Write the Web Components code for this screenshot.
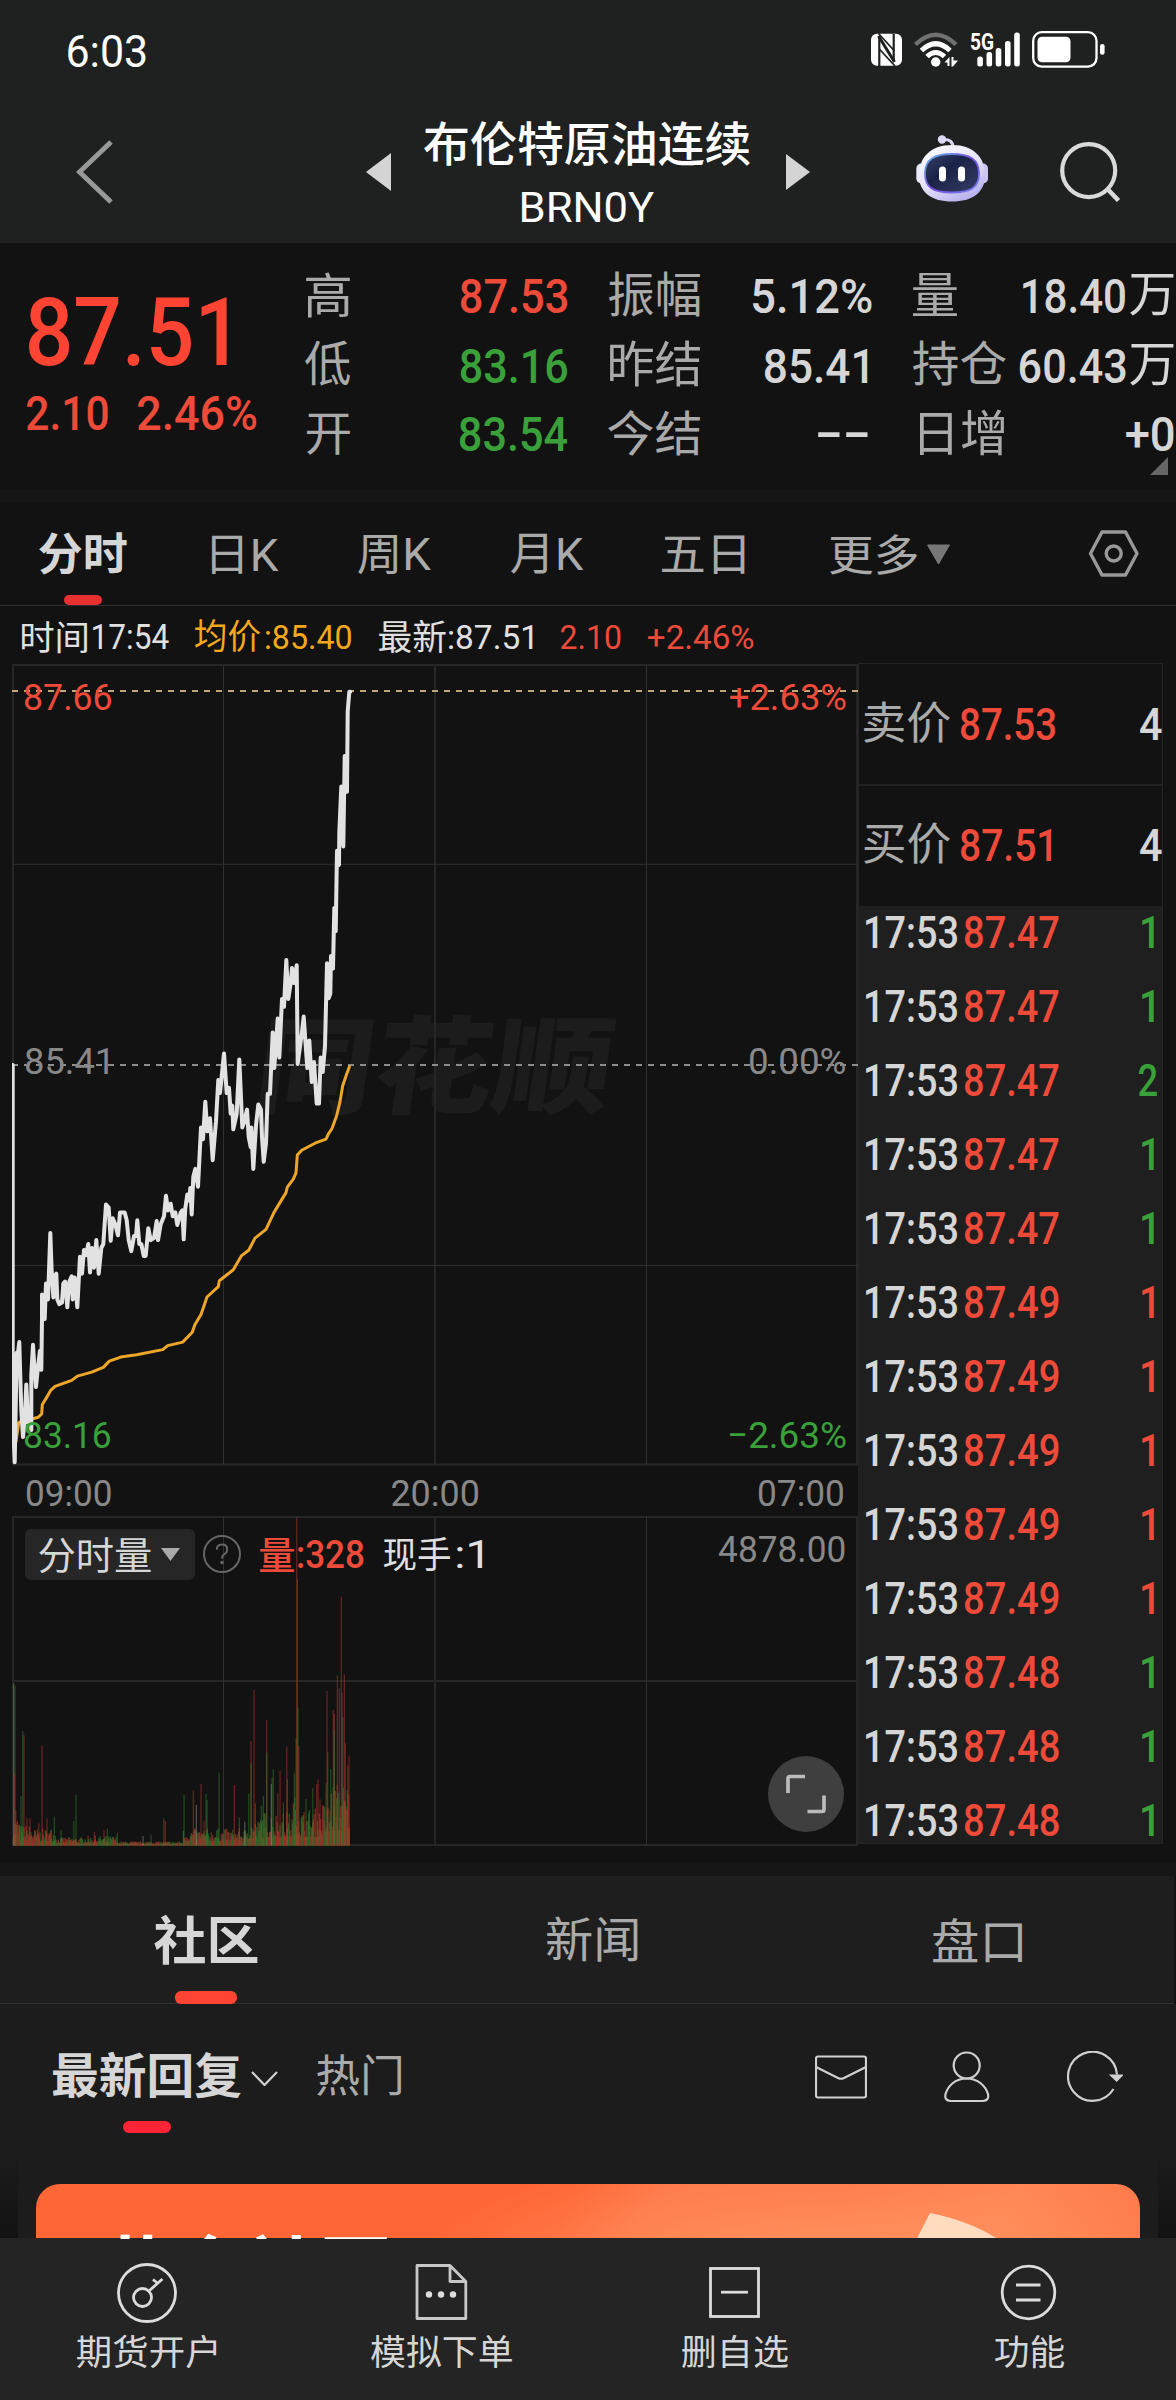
<!DOCTYPE html>
<html lang="zh-CN">
<head>
<meta charset="utf-8">
<title>布伦特原油连续 BRN0Y</title>
<style>
html,body{margin:0;padding:0;background:#121212}
body{width:1176px;height:2400px;overflow:hidden;font-family:Roboto,"Noto Sans CJK SC",sans-serif;color:#d6d6d6;font-weight:400;
--red:#ed4a3a;--hot:#ff4433;--green:#3aa03a;--dim:#aaaaaa;--txt:#d6d6d6}
</style>
</head>
<body>
<quote-page></quote-page>
<script>
const ctx = document.createElement('canvas').getContext('2d');

/* Text sized by its ink: w and h give the drawn width and height of the glyphs. */
class InkText extends HTMLElement {
  connectedCallback() {
    if (this.shadowRoot) return;
    const r = this.attachShadow({mode: 'open'});
    r.innerHTML = '<style>:host{display:block;flex:none}span{display:block;width:max-content;white-space:pre;transform-origin:0 0}i{display:inline-block;width:0;height:0}</style><span><slot></slot><i></i></span>';
    const w = +this.getAttribute('w'), h = +this.getAttribute('h'), dy = +(this.getAttribute('dy') || 0);
    const cs = getComputedStyle(this), s = r.querySelector('span'), t = this.textContent;
    ctx.font = `${cs.fontWeight} 200px ${cs.fontFamily}`;
    const m = ctx.measureText(t);
    const size = this.hasAttribute('size') ? +this.getAttribute('size') : 200 * h / (m.actualBoundingBoxAscent + m.actualBoundingBoxDescent);
    const k = size / 200;
    const inkW = (m.actualBoundingBoxLeft + m.actualBoundingBoxRight) * k;
    const sx = w / inkW;
    this.style.width = w + 'px';
    this.style.height = h + 'px';
    s.style.fontSize = size + 'px';
    s.style.lineHeight = h + 'px';
    const mark = r.querySelector('i');
    const base = mark.getBoundingClientRect().bottom - s.getBoundingClientRect().top;
    s.style.transform = `translate(${m.actualBoundingBoxLeft * k * sx}px,${m.actualBoundingBoxAscent * k - base + dy}px) scaleX(${sx})`;
  }
}
customElements.define('ink-text', InkText);

function define(name, css, html) {
  customElements.define(name, class extends HTMLElement {
    connectedCallback() {
      if (this.shadowRoot) return;
      this.attachShadow({mode: 'open'}).innerHTML =
        `<style>:host{display:block}*{box-sizing:border-box}svg{display:block;flex:none}${css}</style>` +
        (typeof html === 'function' ? html(this) : html);
    }
  });
}

define('status-bar', `:host{display:flex;height:100px;align-items:center;justify-content:space-between;padding:0 68px;color:#fff;font-weight:400}`, `
<ink-text w="77.5" h="33">6:03</ink-text>
<svg width="240" height="100" viewBox="868 0 240 100">
 <rect x="871" y="33.7" width="31" height="32" rx="6" fill="#fff"/>
 <g fill="none" stroke="#1f2120"><path d="M879.300 36V66M893.700 34V60" stroke-width="2.200"/><path d="M878.500 36L894.500 62" stroke-width="3"/><path d="M878.500 33.500L894.500 51M879.300 49L895 66" stroke-width="1.800"/></g>
 <g fill="none" stroke="#fff" stroke-width="5">
  <path d="M915.500 44.500Q935.700 25 956 44.500" stroke="#6f706f" stroke-width="4.500"/>
  <path d="M921.500 50.500Q935.700 37 950 50.500" />
  <path d="M927 56.500Q935.700 48.500 944.500 56.500"/>
 </g>
 <circle cx="935.700" cy="62" r="4.700" fill="#fff"/>
 <path d="M944.500 62.500l5-5.500v9h-2v-3.500zM951.500 57h2v3.500h4.500l-5 6h-1.500z" fill="#fff"/>
 <text x="970" y="49.800" font-family="Roboto" font-weight="700" font-size="23.500" fill="#fff" textLength="24" lengthAdjust="spacingAndGlyphs">5G</text>
 <g fill="#fff"><rect x="977.300" y="56.500" width="5.600" height="10" rx="2.500"/><rect x="986.500" y="52" width="5.600" height="14.500" rx="2.500"/><rect x="995.700" y="48" width="5.600" height="18.500" rx="2.500"/><rect x="1005" y="41" width="5.600" height="25.500" rx="2.500"/><rect x="1014.200" y="32.500" width="5.600" height="34" rx="2.500"/></g>
 <rect x="1033.200" y="32.200" width="63.300" height="34.400" rx="8.500" fill="none" stroke="#fff" stroke-width="2.300"/>
 <rect x="1037.500" y="36.700" width="33" height="25.600" rx="4.500" fill="#fff"/>
 <rect x="1100" y="44" width="4.600" height="10.800" rx="2.200" fill="#fff"/>
</svg>`);

define('title-bar', `:host{display:flex;height:143px;align-items:center;color:#fff}
.t{display:flex;flex-direction:column;align-items:center;gap:26.300px;margin-left:33px;width:326px}
.en{font-weight:400;margin-left:2px}.cn{font-weight:500}`, `
<svg style="margin-left:76px" width="38" height="64" viewBox="76 139 38 64"><path d="M111 141L79.500 171L111 201" fill="none" stroke="#999" stroke-width="5"/></svg>
<svg style="margin-left:252px" width="25" height="38" viewBox="0 0 25 38"><path d="M25 0v38L0 19z" fill="#d4d4d4"/></svg>
<div class="t"><ink-text class="cn" w="326" h="44">布伦特原油连续</ink-text><ink-text class="en" w="132" h="31">BRN0Y</ink-text></div>
<svg style="margin-left:36px" width="24" height="36" viewBox="0 0 24 36"><path d="M0 0v36L24 18z" fill="#d4d4d4"/></svg>
<svg style="margin:-7px 0 0 106px" width="72" height="67" viewBox="916 134.500 72 67">
 <defs><linearGradient id="rb" x1="0" y1="0" x2=".6" y2="1"><stop offset="0" stop-color="#fff"/><stop offset=".6" stop-color="#e4e2fa"/><stop offset="1" stop-color="#b9b4ee"/></linearGradient>
 <linearGradient id="rs" x1="0" y1="0" x2="1" y2="1"><stop offset="0" stop-color="#5fb9e8"/><stop offset=".5" stop-color="#7a4fe0"/><stop offset="1" stop-color="#6f7df0"/></linearGradient>
 <linearGradient id="rf" x1="0" y1="0" x2="1" y2="1"><stop offset="0" stop-color="#38446c"/><stop offset=".4" stop-color="#1a2247"/><stop offset="1" stop-color="#363e66"/></linearGradient></defs>
 <path d="M943 139q10-.5 10 8" fill="none" stroke="#d9d7f3" stroke-width="3"/><circle cx="942" cy="139" r="4.200" fill="#dcdaf5"/>
 <rect x="916.300" y="163" width="12" height="20" rx="5" fill="#e9e8fb"/><rect x="976" y="163" width="12" height="20" rx="5" fill="#c9c6f2"/>
 <path d="M952 144.500c22 0 33 13 33 30c0 18-13 26.500-33 26.500s-33-8.500-33-26.500c0-17 11-30 33-30z" fill="url(#rb)"/>
 <path d="M952 153.500c18 0 27 5.500 27 19.500s-8 19-27 19s-27-5-27-19s9-19.500 27-19.500z" fill="url(#rf)" stroke="url(#rs)" stroke-width="1.800"/>
 <rect x="939" y="166" width="7" height="15" rx="3.500" fill="#fff"/><rect x="958" y="166" width="7" height="15" rx="3.500" fill="#fff"/>
</svg>
<svg style="margin-left:72px" width="61" height="60" viewBox="1060 141 61 60"><circle cx="1088.700" cy="169.600" r="26.500" fill="none" stroke="#dadada" stroke-width="4.200"/><path d="M1107.500 188L1118.500 199.500" stroke="#dadada" stroke-width="4.600"/></svg>`);

define('stat-cell', `:host{display:flex;align-items:center;justify-content:space-between;height:69.300px}::slotted([slot=label]){color:#aaa}.v{display:flex;align-items:center;gap:5px}`,
 `<slot name="label"></slot><div class="v"><slot></slot></div>`);

define('quote-panel', `:host{display:flex;height:247px;background:#121212;padding-left:27px;font-weight:500}
.l{width:279px;display:flex;flex-direction:column;padding-top:54.300px;color:var(--red)}
.chg{display:flex;gap:30.300px;margin-top:28.700px}
.r{padding-top:16.500px;width:870px}
.g{display:grid;grid-template-columns:261px 263.500px 261px;column-gap:42px;color:var(--txt)}
.g>:nth-child(3n){margin-left:-2px;margin-right:2px}.g>:nth-child(3n+2){margin-left:-1px;margin-right:1px}
.c{font-weight:400}
.up{color:var(--red)}.dn{color:var(--green)}
.tri{margin:-10px 0 0 844px}`, `
<div class="l"><ink-text style="margin-left:2px;color:var(--hot)" w="197.5" h="69">87.51</ink-text>
<div class="chg"><ink-text w="80.5" h="35.3">2.10</ink-text><ink-text w="118" h="35.3">2.46%</ink-text></div></div>
<div class="r"><div class="g">
<stat-cell><ink-text class="c" slot="label" w="44" h="44.7">高</ink-text><ink-text class="up" w="106" h="35" dy="1.5">87.53</ink-text></stat-cell>
<stat-cell><ink-text class="c" slot="label" style="margin-left:1px" w="91" h="44.5">振幅</ink-text><ink-text w="118.500" h="35" dy="1.5">5.12%</ink-text></stat-cell>
<stat-cell><ink-text class="c" slot="label" w="44" h="42.5">量</ink-text><ink-text w="102" h="35" dy="1.5">18.40</ink-text><ink-text class="c" w="43.500" h="41">万</ink-text></stat-cell>
<stat-cell><ink-text class="c" slot="label" style="margin-left:-1px" w="45" h="44.7">低</ink-text><ink-text class="dn" w="106" h="35.5" dy="1.8">83.16</ink-text></stat-cell>
<stat-cell><ink-text class="c" slot="label" style="margin-left:2px" w="90" h="45">昨结</ink-text><ink-text style="margin-right:5px" w="102" h="35.3" dy="1.8">85.41</ink-text></stat-cell>
<stat-cell><ink-text class="c" slot="label" w="93" h="44.500">持仓</ink-text><ink-text w="105.500" h="35.300" dy="1.8">60.43</ink-text><ink-text class="c" w="43.500" h="41" dy="1.5">万</ink-text></stat-cell>
<stat-cell><ink-text class="c" slot="label" style="margin-left:1px" w="43" h="40.700" dy="1.500">开</ink-text><ink-text class="dn" w="107" h="35.300" dy="1.5">83.54</ink-text></stat-cell>
<stat-cell><ink-text class="c" slot="label" w="92" h="45">今结</ink-text><ink-text style="margin-right:4px" w="49.700" h="5" size="50" dy="2">--</ink-text></stat-cell>
<stat-cell><ink-text class="c" slot="label" style="margin-left:7px" w="84" h="45">日增</ink-text><ink-text w="47.500" h="35" dy="1.5">+0</ink-text></stat-cell>
</div><svg class="tri" width="18" height="18"><path d="M18 0v18H0z" fill="#666"/></svg></div>`);

define('period-tabs', `:host{display:flex;height:103px;align-items:center;background:#121212;border-bottom:1.500px solid #2e2e2e;color:#aaa;padding-left:39px}
.a{height:100%;display:flex;align-items:center;position:relative;color:var(--txt);font-weight:700}
.a i{position:absolute;left:25px;bottom:0;width:38px;height:10px;border-radius:5px;background:#e93030}`, `
<div class="a"><ink-text w="87.700" h="41.700">分时</ink-text><i></i></div>
<ink-text style="margin-left:85.500px" w="66.500" h="38.300" dy=".8">日K</ink-text>
<ink-text style="margin-left:79.300px" w="73" h="39.500" dy=".6">周K</ink-text>
<ink-text style="margin-left:79.700px" w="72.500" h="39.500" dy=".6">月K</ink-text>
<ink-text style="margin-left:78.500px" w="82.500" h="38.700" dy=".6">五日</ink-text>
<ink-text style="margin-left:86px" w="87" h="40.500" dy=".6">更多</ink-text>
<svg style="margin-left:9px" width="25" height="22"><path d="M1.500 2h22L12.500 21z" fill="#777" stroke="#777" stroke-linejoin="round"/></svg>
<svg style="margin-left:137px" width="52" height="50" viewBox="1088 530 52 50" fill="none" stroke="#999" stroke-width="3.400"><path d="M1090.500 554.500L1102 533h23.500L1137 554.500L1125.500 576H1102z" stroke-linejoin="round"/><circle cx="1113.700" cy="554.500" r="7.500"/></svg>`);

define('info-line', `:host{display:flex;height:58px;align-items:center;padding:3px 0 0 22px;color:#e0e0e0}
.avg{color:#f5a81c}.up{color:var(--red)}`, `
<ink-text w="65" h="32">时间</ink-text><ink-text style="margin-left:5.700px" w="75.500" h="25">17:54</ink-text>
<ink-text class="avg" style="margin-left:27px" w="65" h="32.500">均价</ink-text><ink-text class="avg" style="margin-left:5.500px" w="85" h="25">:85.40</ink-text>
<ink-text style="margin-left:28px" w="66.500" h="32.500">最新</ink-text><ink-text style="margin-left:4px" w="83.300" h="25">:87.51</ink-text>
<ink-text class="up" style="margin-left:28.500px" w="59.300" h="25">2.10</ink-text><ink-text class="up" style="margin-left:27.500px" w="105.300" h="25">+2.46%</ink-text>`);

const price1 = [38,417,38,1300,44,1422,50,1145,54,1145,58,1118,60,1180,64,1290,69,1358,74,1320,79,1225,84,1320,90,1300,94,1340,94,1200,99,1125,103,1180,108,1232,114,1180,120,1140,124,1188,126,1060,126,998,134,1060,138,970,144,1010,151,842,155,940,160,1005,165,950,169,945,172,1010,178,1022,186,1018,190,970,195,965,202,1030,208,965,215,952,218,1010,224,955,232,1030,240,902,246,945,252,885,258,898,265,870,270,942,276,880,282,930,289,860,296,945,304,880,310,870,318,770,326,778,332,862,338,805,346,820,354,848,360,790,374,790,380,810,386,860,394,888,402,850,408,850,412,810,418,870,424,870,431,900,437,900,445,830,452,860,462,855,470,812,474,860,482,820,492,800,498,748,504,785,512,768,518,800,526,790,532,822,542,790,547,785,551,858,556,780,562,745,568,760,571,728,575,795,580,700,586,680,594,725,603,575,609,605,616,510,622,585,630,552,638,658,648,560,655,455,660,488,672,388,680,488,687,475,692,540,697,520,700,580,710,540,718,403,727,575,733,560,741,530,746,600,752,625,754,575,760,680,768,570,775,517,783,530,786,600,791,662,798,615,803,490,810,490,818,335,823,425,833,300,838,398,846,250,852,270,859,152,865,250,872,210,876,172,882,210,890,165,893,415,900,370,905,340,911,295,922,425,928,355,935,460,942,410,950,515,957,515,962,398,968,435,975,370];
const price2 = [381,905,386,1003,391,990,393,885,399,920,403,750,407,815,411,590,417,630,418,540,424,410,430,578,434,325,441,425,443,200,448,145,451,145];
const average = [48,1370,56,1322,70,1316,98,1312,115,1308,125,1300,127,1276,140,1258,152,1240,165,1230,215,1215,232,1204,275,1194,310,1182,328,1166,362,1156,410,1150,488,1137,503,1127,548,1118,577,1093,584,1075,603,1048,621,1004,655,978,658,963,700,935,724,900,746,886,765,855,798,833,822,790,858,740,862,726,880,706,888,690,892,645,905,633,945,615,978,605,985,592,996,578,1010,545,1020,510,1028,470,1040,440,1048,422];
const pts = (a, fx, fy) => { const o = []; for (let i = 0; i < a.length; i += 2) o.push(fx(a[i]).toFixed(1) + ',' + fy(a[i + 1]).toFixed(1)); return o.join(' '); };
const early = a => pts(a, x => x / 3, y => 900 + y / 2.529);
const late = a => pts(a, x => 200 + x / 3, y => 640 + y / 2.8);

function volumeBars() {
  const R = '#b5362c', G = '#2f7d2b', W = '#8a8a8a', O = '#6f5a22';
  let seed = 7, out = '';
  const rnd = () => (seed = (seed * 16807) % 2147483647) / 2147483647;
  const bar = (x, top, c, o = .45) => { out += `<rect x="${(x / 3 - .6).toFixed(1)}" y="${(1490 + top / 3).toFixed(1)}" width="1.300" height="${((1067 - top) / 3).toFixed(1)}" fill="${c}" opacity="${o}"/>`; };
  for (let x = 40; x <= 1049; x += 2) {
    let e = x < 60 ? 90 : x < 100 ? 60 : x < 170 ? 48 : x < 250 ? 22 : x < 350 ? 26 : x < 550 ? 9 : x < 740 ? 48 : x < 780 ? 75 : x < 880 ? 100 : x < 900 ? 150 : x < 960 ? 110 : x < 990 ? 130 : 190;
    const h = 4 + e * (.2 + .8 * Math.pow(rnd(), 1.6));
    bar(x, 1067 - h, rnd() < .56 ? R : G, .62);
  }
  [[41,580,W],[45,588,G],[43,850,R],[47,960,R],[63,918,G],[68,724,G],[72,736,R],[81,985,R],[90,985,R],[126,766,R],[116,1000,R],[141,985,R],[163,980,G],[154,1018,G],[221,993,G],[228,915,G],[183,1020,G],[283,1025,R],[312,1020,R],[322,1016,G],[352,1028,G],[429,1038,W],[453,1034,G],[491,984,R],[496,993,R],
   [552,914,G],[580,901,R],[589,945,W],[603,882,R],[612,992,R],[618,912,G],[621,930,G],[657,848,G],[703,885,R],[718,982,G],[734,995,W],[746,912,G],[753,753,R],[753,820,G],[762,600,R],[766,940,R],[784,948,G],[790,918,G],[800,690,R],[800,788,G],[816,862,G],[820,838,G],[814,882,W],[833,910,R],[840,843,R],[850,937,G],[860,770,R],[862,868,G],[883,850,G],[888,745,G],[890,82,R],[892,268,O],[894,655,G],[896,768,R],[918,927,G],[938,894,G],[950,882,R],[954,868,R],[960,928,R],[978,880,G],[981,603,R],[983,787,G],[992,837,G],[1000,660,R],[1003,672,R],[1003,720,G],[1012,556,R],[1018,595,R],[1024,320,R],[1026,608,R],[1028,681,G],[1033,553,R],[1036,760,R],[1043,826,R],[1047,797,R],[1046,915,R]]
   .forEach(b => bar(b[0], b[1], b[2], .5));
  return out;
}

define('price-chart', `:host{display:grid;width:846px;height:1182px;flex:none}
:host>*,.wm,.plot,.lay{grid-area:1/1}
.wm{margin:350px 0 0 252px;width:346px;height:102px;transform:skewX(-8deg);color:#1c1c1c;font-weight:900;z-index:0}
.plot{z-index:1}
.lay{display:flex;flex-direction:column;color:#888;z-index:2}
.row{display:flex;justify-content:space-between;align-items:center;padding:0 13px}
.up{color:var(--red)}.dn{color:var(--green)}
.vol{display:flex;align-items:center;height:51px;margin:21.500px 0 0 13px}
.pill{display:flex;align-items:center;width:170px;height:51px;border-radius:6px;background:#262626;padding-left:14px;color:var(--txt)}
.full{margin:176px 14px 0 auto}`, () => `
<div class="wm"><ink-text w="346" h="102">同花顺</ink-text></div>
<svg class="plot" width="846" height="1182" viewBox="12 664 846 1182">
 <g fill="none" stroke="#262626" stroke-width="2">
  <path d="M12 665H858M13 664V1465M857 664V1465M12 1464.500H858M435 665V1465M12 1517H858M12 1681H858M12 1845H858M13 1516V1846M857 1516V1846M435 1516V1846"/>
  <path d="M223.500 665V1465M646.500 665V1465M12 864.300H858M12 1265.500H858M223.500 1516V1846M646.500 1516V1846" stroke="#303030" stroke-width="1"/></g>
 ${volumeBars()}
 <path d="M12 691H858" stroke="#c3a877" stroke-width="2" stroke-dasharray="6 6"/>
 <path d="M12 1065H858" stroke="#8d8d8d" stroke-width="2" stroke-dasharray="6 6"/>
 <g fill="none" stroke-linejoin="round" stroke-linecap="round">
 <polyline stroke="#eda628" stroke-width="3" points="${early(average)}"/>
 <polyline stroke="#e2e2e2" stroke-width="4" points="${early(price1)} ${late(price2)}"/></g>
</svg>
<div class="lay">
 <div class="row up" style="margin-top:19px"><ink-text w="86" h="27">87.66</ink-text><ink-text w="115.500" h="27">+2.63%</ink-text></div>
 <div class="row" style="margin-top:336.700px"><ink-text style="margin-left:.5px" w="82" h="27.300">85.41</ink-text><ink-text w="95" h="27.300">0.00%</ink-text></div>
 <div class="row dn" style="margin-top:347px"><ink-text w="85" h="27.400">83.16</ink-text><ink-text w="115.500" h="27.400">−2.63%</ink-text></div>
 <div class="row" style="margin-top:31px;padding:0 15px"><ink-text w="83.700" h="27.700">09:00</ink-text><ink-text w="86" h="27.700">20:00</ink-text><ink-text w="84" h="27.700">07:00</ink-text></div>
 <div class="vol"><div class="pill"><ink-text w="111.700" h="35">分时量</ink-text><svg style="margin-left:10px" width="19" height="13"><path d="M0 0h19L9.500 13z" fill="#aaa"/></svg></div>
 <svg style="margin-left:7px" width="40" height="40" viewBox="0 0 40 40"><circle cx="20" cy="20" r="18" fill="none" stroke="#666" stroke-width="2"/><path d="M14.800 15.800q0-5.200 5.200-5.200t5.200 4.800q0 2.800-2.700 4.600T20 24.500" fill="none" stroke="#666" stroke-width="2"/><circle cx="20" cy="28.500" r="1.700" fill="#666"/></svg>
 <ink-text class="up" style="margin-left:17.500px;font-weight:500" w="34" h="33">量</ink-text><ink-text class="up" style="margin-left:4.500px;font-weight:500" w="65.300" h="28">:328</ink-text>
 <ink-text style="margin-left:21px;color:#e0e0e0" w="66" h="34">现手</ink-text><ink-text style="margin-left:7px;color:#e0e0e0" w="25" h="28">:1</ink-text>
 <ink-text style="margin-left:237px" w="125.500" h="27.700" dy="-5.500">4878.00</ink-text></div>
 <svg class="full" width="76" height="76" viewBox="0 0 76 76"><circle cx="38" cy="38" r="38" fill="#3f3f3f"/><path d="M37 20.500H22Q20 20.500 20 22.500V37M56 39.500V53.500Q56 55.500 54 55.500H39.500" fill="none" stroke="#bbb" stroke-width="3.700"/></svg>
</div>`);

define('trade-row', `:host{display:flex;height:74px;align-items:flex-start;padding:10px 0 0 7px;color:var(--txt);font-weight:500}
.p{color:var(--red);margin-left:8px}.q{margin-left:79px;width:20px;display:flex;justify-content:center}.r{color:var(--red)}.g{color:var(--green)}`,
 el => `<ink-text w="91" h="32">17:53</ink-text><ink-text class="p" w="93.500" h="32">${el.getAttribute('p')}</ink-text><div class="q ${el.getAttribute('c')}"><ink-text w="${el.getAttribute('q') === '1' ? 11.5 : 18}" h="32">${el.getAttribute('q')}</ink-text></div>`);

define('order-side', `:host{display:block;width:305px;height:1181px;border:1.500px solid #242424;border-left-width:1px;margin-top:-.700px}
.q{display:flex;align-items:center;height:120px;padding-left:4.500px;font-weight:500}
.q+.q{border-top:2px solid #222;height:122px}
.n{color:#aaa;font-weight:400}.p{color:var(--red);margin-left:11.500px}.v{color:var(--txt)}
.list{background:#1f1f1f;height:937px}trade-row:last-child{height:49px}`, () => `
<div class="q"><ink-text class="n" w="86" h="41.500" dy="-2">卖价</ink-text><ink-text class="p" w="94" h="32">87.53</ink-text><ink-text class="v" style="margin-left:84.500px" w="21.500" h="32">4</ink-text></div>
<div class="q"><ink-text class="n" w="86" h="41.500" dy="-3">买价</ink-text><ink-text class="p" w="90" h="32" dy="-1">87.51</ink-text><ink-text class="v" style="margin-left:88.500px" w="21.500" h="32" dy="-1">4</ink-text></div>
<div class="list">${[['87.47',1,'g'],['87.47',1,'g'],['87.47',2,'g'],['87.47',1,'g'],['87.47',1,'g'],['87.49',1,'r'],['87.49',1,'r'],['87.49',1,'r'],['87.49',1,'r'],['87.49',1,'r'],['87.48',1,'g'],['87.48',1,'g'],['87.48',1,'g']].map(t => `<trade-row p="${t[0]}" q="${t[1]}" c="${t[2]}"></trade-row>`).join('')}</div>`);

define('section-tabs', `:host{display:flex;height:128px;margin-right:2px;background:#1e1e1e;border-bottom:1.500px solid #303030;color:#aaa}
div{flex:0 0 391.300px;display:flex;align-items:center;justify-content:center;position:relative}
.a{color:var(--txt);font-weight:700;padding-left:20px}.b{padding-left:10px}.c{padding-right:1px}
.a i{position:absolute;left:175px;bottom:-1px;width:62px;height:13px;border-radius:6px;background:#ff4433}`, `
<div class="a"><ink-text w="103.500" h="50">社区</ink-text><i></i></div>
<div class="b"><ink-text w="90.500" h="44.500">新闻</ink-text></div>
<div class="c"><ink-text w="89" h="43.500">盘口</ink-text></div>`);

define('feed-bar', `:host{display:flex;height:147px;align-items:center;padding-left:53px;position:relative}
svg{fill:none;stroke:#d0d0d0;stroke-width:2.200}
i{position:absolute;left:123px;top:117px;width:48px;height:12px;border-radius:6px;background:#ff2436}`, `
<ink-text style="font-weight:700" w="188" h="45.500" dy="-3">最新回复</ink-text>
<svg style="margin-left:10px" width="27" height="16"><path d="M1 2L13.500 15L26 2"/></svg>
<ink-text style="margin-left:39px;color:#aaa" w="84" h="41.500" dy="-3">热门</ink-text><i></i>
<svg style="margin:-2px 0 0 414px" width="52" height="44" viewBox="815 2054.500 52 44"><rect x="816" y="2056" width="50" height="41" rx="2"/><path d="M816 2066.500L838 2077.500Q841 2079 844 2077.500L866 2066.500"/></svg>
<svg style="margin:-2px 0 0 76px" width="48" height="52" viewBox="943 2050 48 52"><ellipse cx="966.700" cy="2064.500" rx="13" ry="13"/><path d="M966.700 2077.500C955 2077.500 948 2085 945.500 2093Q944 2099.500 950.500 2100H983Q989.500 2099.500 988 2093C985.500 2085 978 2077.500 966.700 2077.500z"/></svg>
<svg style="margin:-2px 0 0 76px" width="56" height="52" viewBox="1067 2050 56 52"><path d="M1117 2073.500A24.500 24.500 0 1 0 1113.500 2088"/><path d="M1111.500 2074.500H1121.500L1116.700 2079.500z" fill="#d0d0d0"/></svg>`);

define('promo-banner', `:host{display:flex;height:88px;padding:0 18px;overflow:hidden;background:linear-gradient(#1c1c1c,#121212)}
.in{padding:33px 18px 0;background:#1c1c1c;width:1140px;height:88px}
.card{height:100px;border-radius:24px 24px 0 0;overflow:hidden;display:flex;background:radial-gradient(ellipse 420px 130px at 800px 90px,#ff9765,transparent),linear-gradient(120deg,#ff6636 0 47%,#ff7545 55%,#ff7443 70%,#ff8452 85%,#ff7445)}
.t{margin:49.500px 0 0 67px;color:#fff;font-weight:700}`, `
<div class="in"><div class="card"><ink-text class="t" w="286" h="64">黄金社区</ink-text>
<svg style="margin-left:528px" width="80" height="60" viewBox="917 2184 80 60"><path d="M930 2213L914 2244H1005Q975 2222 930 2213z" fill="#ffdcbf"/></svg></div></div>`);

define('nav-item', `:host{display:flex;flex-direction:column;align-items:center;flex:1;padding-top:22px;color:var(--txt)}`, `<slot></slot>`);
define('bottom-nav', `:host{display:flex;height:162px;background:#242424}
svg{fill:none;stroke:#dcdcdc;stroke-width:2.800;margin-bottom:10.500px}`, `
<nav-item><svg width="64" height="64" viewBox="115 2260 64 64"><ellipse cx="147" cy="2293" rx="28.500" ry="28.500"/><circle cx="142.500" cy="2297.500" r="9"/><path d="M149.500 2290.500L162.400 2279M153 2279.500L158 2283.500" /></svg><ink-text style="margin-left:-2px" w="139" h="33">期货开户</ink-text></nav-item>
<nav-item><svg width="64" height="64" viewBox="409 2260 64 64"><path d="M417 2265.500H450L465.800 2281.500V2318.500H417zM450 2265.500V2281.500H465.800" stroke-linejoin="round" stroke="#c8c8c8"/><g fill="#dcdcdc" stroke="none"><circle cx="429" cy="2294.500" r="3.200"/><circle cx="441" cy="2294.500" r="3.200"/><circle cx="453" cy="2294.500" r="3.200"/></g></svg><ink-text w="141" h="33">模拟下单</ink-text></nav-item>
<nav-item><svg width="64" height="64" viewBox="703 2260 64 64"><rect x="710.500" y="2268.500" width="48" height="48"/><path d="M721 2292.200H748"/></svg><ink-text w="106" h="33">删自选</ink-text></nav-item>
<nav-item><svg width="64" height="64" viewBox="997 2260 64 64"><circle cx="1028.500" cy="2292.500" r="26.300"/><path d="M1016 2285H1040.500M1016 2300H1040.500"/></svg><ink-text w="69" h="33">功能</ink-text></nav-item>`);

define('quote-page', `:host{display:flex;flex-direction:column;width:1176px;height:2400px;background:#121212}
header{background:#1f2120}
.strip{height:13px;background:#161616;flex:none}
.main{display:flex;padding-left:12px;height:1199px;flex:none}
.low{background:#1c1c1c;height:234px;flex:none}
section-tabs{flex:none}`, `
<header><status-bar></status-bar><title-bar></title-bar></header>
<quote-panel></quote-panel><div class="strip"></div>
<period-tabs></period-tabs><info-line></info-line>
<div class="main"><price-chart></price-chart><order-side></order-side></div>
<div class="strip"></div>
<section-tabs></section-tabs>
<div class="low"><feed-bar></feed-bar><promo-banner></promo-banner></div>
<bottom-nav></bottom-nav>`);
</script>
</body>
</html>
